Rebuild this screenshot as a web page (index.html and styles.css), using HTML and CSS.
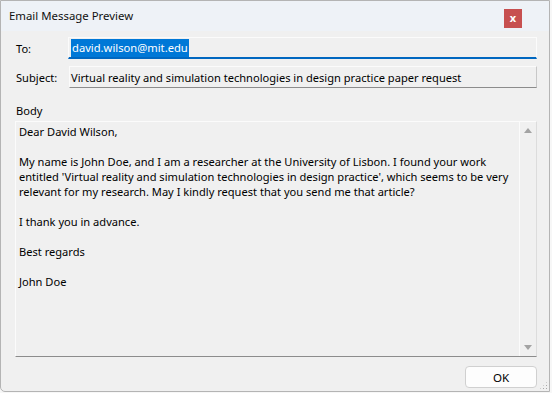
FILE: index.html
```html
<!DOCTYPE html>
<html>
<head>
<meta charset="utf-8">
<link rel="stylesheet" href="styles.css">
</head>
<body>
<div class="window">
  <div class="titlebar">
    <span class="title">Email Message Preview</span>
    <span class="close">x</span>
  </div>
  <div class="content">
    <div class="row row-to">
      <span class="label">To:</span>
      <div class="field field-to"><span class="sel">david.wilson@mit.edu</span></div>
    </div>
    <div class="row row-subject">
      <span class="label">Subject:</span>
      <div class="field field-subject">Virtual reality and simulation technologies in design practice paper request</div>
    </div>
    <div class="body-label">Body</div>
    <div class="textarea">
      <div class="text">
        <p>Dear David Wilson,</p>
        <p>&nbsp;</p>
        <p>My name is John Doe, and I am a researcher at the University of Lisbon. I found your work entitled 'Virtual reality and simulation technologies in design practice', which seems to be very relevant for my research. May I kindly request that you send me that article?</p>
        <p>&nbsp;</p>
        <p>I thank you in advance.</p>
        <p>&nbsp;</p>
        <p>Best regards</p>
        <p>&nbsp;</p>
        <p>John Doe</p>
      </div>
      <div class="scrollbar">
        <span class="arrow up"></span>
        <span class="arrow down"></span>
      </div>
    </div>
    <div class="footer">
      <button class="ok">OK</button>
    </div>
  </div>
  <div class="grip"></div>
</div>
</body>
</html>
```

FILE: styles.css
```css
html, body {
  margin: 0;
  padding: 0;
  background: #f7f7f7;
}
body {
  width: 552px;
  height: 393px;
  overflow: hidden;
  font-family: "Noto Sans", "Open Sans", sans-serif;
  font-size: 11.1px;
  color: #000;
}
.window {
  position: relative;
  box-sizing: border-box;
  width: 550px;
  height: 392px;
  border: 1px solid #b4b4b4;
  border-radius: 0 0 0 5px;
  background: #f0f0f0;
  display: flex;
  flex-direction: column;
}
.titlebar {
  height: 30px;
  background: #eef2f7;
  display: flex;
  align-items: center;
  padding-left: 8px;
}
.title {
  font-size: 11.4px;
  color: #111;
  margin-top: -1px;
}
.close {
  margin-left: auto;
  margin-right: 27px;
  width: 18px;
  height: 19px;
  margin-top: 5px;
  background: #c75050;
  color: #fff;
  font-weight: bold;
  font-size: 11px;
  line-height: 17px;
  text-align: center;
}
.content {
  flex: 1;
  display: flex;
  flex-direction: column;
  padding: 6px 12px 0 13px;
}
.row {
  display: flex;
  align-items: center;
}
.label {
  width: 52px;
  padding-left: 2px;
}
.field {
  flex: 1;
  box-sizing: border-box;
  height: 21px;
  background: #f0f0f0;
  display: flex;
  align-items: center;
  padding-left: 2px;
}
.field-to {
  border: 1px solid #fbfbfb;
  border-bottom: 2px solid #0067c0;
  height: 22px;
  font-size: 11.2px;
}
.sel {
  background: #0078d7;
  color: #fff;
  padding: 0 1px;
  line-height: 18px;
}
.row-subject {
  margin-top: 7px;
}
.field-subject {
  margin-left: 1px;
  border: 1px solid #fbfbfb;
  border-bottom: 1px solid #8c8c8c;
  border-right: 1px solid #c8c8c8;
  height: 22px;
  padding-left: 1px;
}
.body-label {
  margin-top: 13px;
  padding-left: 2px;
  line-height: 20px;
}
.textarea {
  box-sizing: border-box;
  height: 236px;
  margin-left: 1px;
  border: 1px solid #fbfbfb;
  border-bottom: 1px solid #8c8c8c;
  border-right: 1px solid #dcdcdc;
  display: flex;
}
.text {
  flex: 1;
  padding: 2px 4px 0 3px;
}
.text p {
  margin: 0;
  line-height: 15px;
}
.scrollbar {
  width: 16px;
  border-left: 1px solid #fbfbfb;
  display: flex;
  flex-direction: column;
  justify-content: space-between;
  align-items: center;
  padding: 6px 0 6px 0;
}
.arrow {
  width: 0;
  height: 0;
  border-left: 4px solid transparent;
  border-right: 4px solid transparent;
}
.arrow.up {
  border-bottom: 5px solid #a3a3a3;
}
.arrow.down {
  border-top: 5px solid #a3a3a3;
}
.footer {
  display: flex;
  justify-content: flex-end;
  padding-top: 9px;
}
.ok {
  width: 72px;
  height: 22px;
  box-sizing: border-box;
  background: #fdfdfd;
  border: 1px solid #d0d0d0;
  border-radius: 4px;
  font-family: "Noto Sans", "Open Sans", sans-serif;
  font-size: 11.6px;
  color: #000;
  padding: 0;
}
.grip {
  position: absolute;
  right: 1px;
  bottom: 1px;
  width: 9px;
  height: 9px;
  background:
    radial-gradient(circle, #a8a8a8 0.8px, transparent 1px) 0 0 / 3px 3px;
  clip-path: polygon(100% 0, 100% 100%, 0 100%);
}
```
